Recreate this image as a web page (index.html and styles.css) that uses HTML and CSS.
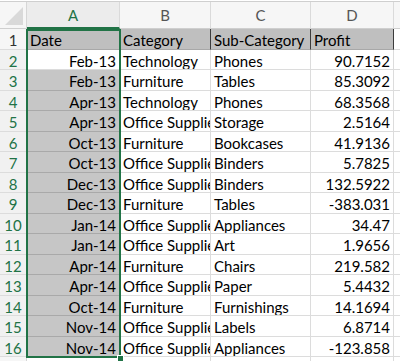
FILE: index.html
```html
<!DOCTYPE html>
<html>
<head>
<meta charset="utf-8">
<link rel="stylesheet" href="styles.css">
</head>
<body>
<div class="sheet">
  <div class="grid">
    <div class="corner"><span class="tri"></span></div>
    <div class="colhead sel">A</div>
    <div class="colhead">B</div>
    <div class="colhead">C</div>
    <div class="colhead">D</div>
    <div class="colhead blank"></div>

    <div class="rowhead">1</div>
    <div class="cell hdr">Date</div>
    <div class="cell hdr">Category</div>
    <div class="cell hdr">Sub-Category</div>
    <div class="cell hdr">Profit</div>
    <div class="cell blank"></div>

    <div class="rowhead g">2</div>
    <div class="cell num active">Feb-13</div>
    <div class="cell">Technology</div>
    <div class="cell">Phones</div>
    <div class="cell num">90.7152</div>
    <div class="cell blank"></div>

    <div class="rowhead g">3</div>
    <div class="cell num selc">Feb-13</div>
    <div class="cell">Furniture</div>
    <div class="cell">Tables</div>
    <div class="cell num">85.3092</div>
    <div class="cell blank"></div>

    <div class="rowhead g">4</div>
    <div class="cell num selc">Apr-13</div>
    <div class="cell">Technology</div>
    <div class="cell">Phones</div>
    <div class="cell num">68.3568</div>
    <div class="cell blank"></div>

    <div class="rowhead g">5</div>
    <div class="cell num selc">Apr-13</div>
    <div class="cell">Office Supplies</div>
    <div class="cell">Storage</div>
    <div class="cell num">2.5164</div>
    <div class="cell blank"></div>

    <div class="rowhead g">6</div>
    <div class="cell num selc">Oct-13</div>
    <div class="cell">Furniture</div>
    <div class="cell">Bookcases</div>
    <div class="cell num">41.9136</div>
    <div class="cell blank"></div>

    <div class="rowhead g">7</div>
    <div class="cell num selc">Oct-13</div>
    <div class="cell">Office Supplies</div>
    <div class="cell">Binders</div>
    <div class="cell num">5.7825</div>
    <div class="cell blank"></div>

    <div class="rowhead g">8</div>
    <div class="cell num selc">Dec-13</div>
    <div class="cell">Office Supplies</div>
    <div class="cell">Binders</div>
    <div class="cell num">132.5922</div>
    <div class="cell blank"></div>

    <div class="rowhead g">9</div>
    <div class="cell num selc">Dec-13</div>
    <div class="cell">Furniture</div>
    <div class="cell">Tables</div>
    <div class="cell num">-383.031</div>
    <div class="cell blank"></div>

    <div class="rowhead g">10</div>
    <div class="cell num selc">Jan-14</div>
    <div class="cell">Office Supplies</div>
    <div class="cell">Appliances</div>
    <div class="cell num">34.47</div>
    <div class="cell blank"></div>

    <div class="rowhead g">11</div>
    <div class="cell num selc">Jan-14</div>
    <div class="cell">Office Supplies</div>
    <div class="cell">Art</div>
    <div class="cell num">1.9656</div>
    <div class="cell blank"></div>

    <div class="rowhead g">12</div>
    <div class="cell num selc">Apr-14</div>
    <div class="cell">Furniture</div>
    <div class="cell">Chairs</div>
    <div class="cell num">219.582</div>
    <div class="cell blank"></div>

    <div class="rowhead g">13</div>
    <div class="cell num selc">Apr-14</div>
    <div class="cell">Office Supplies</div>
    <div class="cell">Paper</div>
    <div class="cell num">5.4432</div>
    <div class="cell blank"></div>

    <div class="rowhead g">14</div>
    <div class="cell num selc">Oct-14</div>
    <div class="cell">Furniture</div>
    <div class="cell">Furnishings</div>
    <div class="cell num">14.1694</div>
    <div class="cell blank"></div>

    <div class="rowhead g">15</div>
    <div class="cell num selc">Nov-14</div>
    <div class="cell">Office Supplies</div>
    <div class="cell">Labels</div>
    <div class="cell num">6.8714</div>
    <div class="cell blank"></div>

    <div class="rowhead g">16</div>
    <div class="cell num selc">Nov-14</div>
    <div class="cell">Office Supplies</div>
    <div class="cell">Appliances</div>
    <div class="cell num">-123.858</div>
    <div class="cell blank"></div>

    <div class="rowhead">17</div>
    <div class="cell"></div>
    <div class="cell"></div>
    <div class="cell"></div>
    <div class="cell"></div>
    <div class="cell blank"></div>
  </div>
  <div class="selection"></div>
  <div class="handle"></div>
</div>
</body>
</html>
```
FILE: styles.css
```css
html, body {
  margin: 0;
  padding: 0;
  background: #ffffff;
  overflow: hidden;
}
.sheet {
  position: relative;
  margin-top: 1px;
  border-top: 1px solid #cfcfcf;
  font-family: "Lato", "Liberation Sans", sans-serif;
  font-size: 15px;
  color: #000;
}
.grid {
  display: grid;
  grid-template-columns: 27px 93px 91px 100px 83px 20px;
  grid-template-rows: 27px repeat(17, 20.5px);
}
.grid > div {
  box-sizing: border-box;
  overflow: hidden;
  white-space: nowrap;
}
.corner {
  position: relative;
  background: #f6f6f6;
  border-right: 1px solid #d6d6d6;
  border-bottom: 1px solid #cfcfcf;
}
.tri {
  position: absolute;
  right: 3px;
  bottom: 3px;
  width: 0;
  height: 0;
  border-left: 18px solid transparent;
  border-bottom: 18px solid #d9d9d9;
}
.colhead {
  background: #f6f6f6;
  border-right: 1px solid #dadada;
  border-bottom: 1px solid #cfcfcf;
  color: #555;
  text-align: center;
  line-height: 27px;
  font-size: 15px;
}
.colhead.sel {
  background: #ececec;
  color: #217346;
  border-bottom: 2px solid #217346;
  line-height: 26px;
}
.colhead.blank {
  border-right: none;
}
.rowhead {
  background: #f6f6f6;
  border-right: 1px solid #d6d6d6;
  border-bottom: 1px solid #dcdcdc;
  color: #333;
  text-align: center;
  padding-top: 1px;
  line-height: 20px;
  font-size: 15px;
}
.rowhead.g {
  color: #217346;
  background: #f1f1f1;
}
.cell {
  border-right: 1px solid #dcdcdc;
  border-bottom: 1px solid #dcdcdc;
  padding: 1px 3px 0 3px;
  line-height: 20px;
  background: #ffffff;
}
.cell.num {
  text-align: right;
  padding-right: 3px;
}
.cell.hdr {
  background: #bfbfbf;
  border-right: 1px solid #3c3c3c;
  border-bottom: 1px solid #a8a8a8;
}
.cell.selc {
  background: #c6c6c6;
  border-bottom: 1px solid #a9a9a9;
}
.cell.active {
  background: #ffffff;
}
.cell.blank {
  border-right: none;
}
.selection {
  position: absolute;
  left: 26px;
  top: 27px;
  width: 95px;
  height: 329px;
  box-sizing: border-box;
  border: 2px solid #217346;
  pointer-events: none;
}
.handle {
  position: absolute;
  left: 117px;
  top: 353px;
  width: 7px;
  height: 7px;
  box-sizing: border-box;
  background: #217346;
  border: 1px solid #ffffff;
}
```
